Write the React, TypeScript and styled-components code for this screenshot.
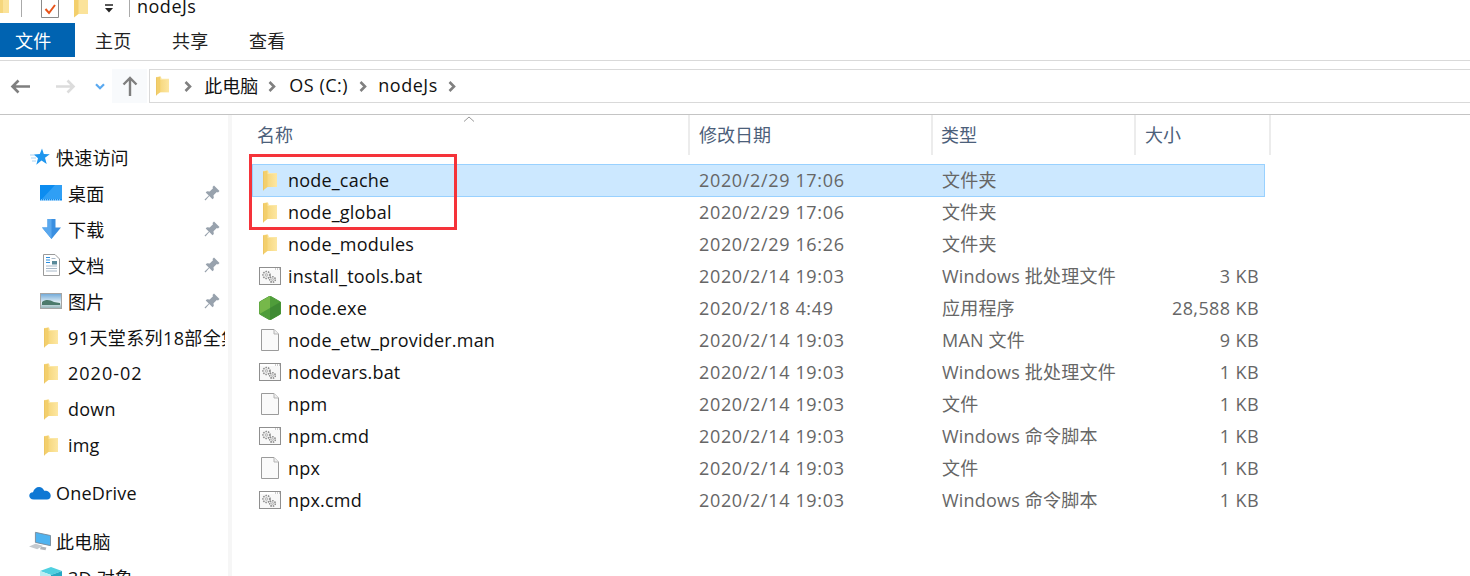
import React from "react";
import styled, { createGlobalStyle } from "styled-components";

const GlobalStyle = createGlobalStyle`
  html, body { margin: 0; padding: 0; background: #fff; }
  body { font-family: "Open Sans", "Noto Sans CJK SC", sans-serif; color: #111; }
`;

const Page = styled.div`
  width: 1470px;
  height: 576px;
  overflow: hidden;
  display: flex;
  flex-direction: column;
  font-size: 18px;
  letter-spacing: 0.2px;
`;

const TitleBar = styled.div`
  height: 23px;
  display: flex;
  align-items: flex-start;
  overflow: hidden;
  flex: none;
`;

const TitleItem = styled.span<{ $ml: number }>`
  display: flex;
  flex: none;
  margin-left: ${(p) => p.$ml}px;
`;

const TitleSep = styled.div<{ $ml: number }>`
  width: 1px;
  height: 17px;
  background: #aaa;
  margin-left: ${(p) => p.$ml}px;
  flex: none;
`;

const TitleText = styled.span`
  margin: -5px 0 0 7px;
  line-height: 22px;
  letter-spacing: 0.5px;
`;

const TabBar = styled.div`
  height: 37px;
  border-bottom: 1px solid #d9d9d9;
  display: flex;
  align-items: flex-start;
  flex: none;
`;

const Tab = styled.div<{ $active?: boolean }>`
  height: 34px;
  width: ${(p) => (p.$active ? 75 : 77)}px;
  display: flex;
  align-items: center;
  padding-left: ${(p) => (p.$active ? 15 : 20)}px;
  box-sizing: border-box;
  background: ${(p) => (p.$active ? "#0063b1" : "transparent")};
  color: ${(p) => (p.$active ? "#fff" : "#222")};
`;

const AddressRow = styled.div`
  height: 54px;
  border-bottom: 1px solid #c4c4c4;
  display: flex;
  align-items: flex-start;
  flex: none;
  box-sizing: border-box;
  padding-top: 8px;
`;

const NavButton = styled.div<{ $w: number; $box?: boolean; $ml?: number }>`
  width: ${(p) => p.$w}px;
  margin-left: ${(p) => p.$ml ?? 0}px;
  height: 34px;
  display: flex;
  align-items: center;
  justify-content: center;
  background: ${(p) => (p.$box ? "#f8fafc" : "transparent")};
  flex: none;
`;

const AddressBox = styled.div`
  flex: 1;
  height: 34px;
  margin: 0 -2px 0 2px;
  border: 1px solid #d9d9d9;
  display: flex;
  align-items: center;
  box-sizing: border-box;
  padding-left: 6px;
`;

const Crumb = styled.span<{ $w: number }>`
  width: ${(p) => p.$w}px;
  flex: none;
  white-space: nowrap;
  margin-top: -2px;
  letter-spacing: ${(p) => (p.$w > 64 ? 0.5 : 0)}px;
`;

const ChevronSlot = styled.span<{ $before: number; $after: number }>`
  display: flex;
  flex: none;
  margin: 1px ${(p) => p.$after}px 0 ${(p) => p.$before}px;
`;

const Body = styled.div`
  flex: 1;
  display: flex;
  min-height: 0;
`;

const Sidebar = styled.div`
  width: 228px;
  flex: none;
  border-right: 4px solid #f6f6f6;
  overflow: hidden;
  padding-top: 24px;
`;

const NavItem = styled.div<{ $level: number; $gap?: number }>`
  height: 36px;
  display: flex;
  align-items: center;
  padding-left: ${(p) => (p.$level ? 40 : 29)}px;
  margin-top: ${(p) => p.$gap ?? 0}px;
  white-space: nowrap;
  overflow: hidden;
`;

const NavIcon = styled.span<{ $level: number }>`
  width: 22px;
  margin-right: ${(p) => (p.$level ? 6 : 5)}px;
  display: flex;
  align-items: center;
  justify-content: center;
  flex: none;
`;

const NavLabel = styled.span<{ $pinned?: boolean; $tracking?: number }>`
  width: ${(p) => (p.$pinned ? 136 : 157)}px;
  overflow: hidden;
  flex: none;
  letter-spacing: ${(p) => p.$tracking ?? 0.2}px;
`;

const Main = styled.div`
  flex: 1;
  position: relative;
  min-width: 0;
`;

const ColumnHeader = styled.div`
  height: 40px;
  display: grid;
  grid-template-columns: 457px 243px 203px 135px;
  color: #4c607a;
  padding-left: 1px;
  letter-spacing: 0;
`;

const HeaderCell = styled.div<{ $pl: number }>`
  border-right: 2px solid #ececec;
  display: flex;
  align-items: center;
  padding: 0 0 2px ${(p) => p.$pl}px;
  box-sizing: border-box;
`;

const SortCaret = styled.svg`
  position: absolute;
  left: 231px;
  top: 1px;
`;

const Rows = styled.div`
  padding: 9px 0 0 20px;
  width: 1013px;
`;

const Row = styled.div<{ $selected?: boolean }>`
  display: grid;
  grid-template-columns: 35px 411px 243px 203px 1fr;
  align-items: center;
  box-sizing: border-box;
  border: 1px solid ${(p) => (p.$selected ? "#99d1ff" : "transparent")};
  background: ${(p) => (p.$selected ? "#cce8ff" : "transparent")};
  margin-bottom: ${(p) => (p.$selected ? -1 : 0)}px;
  padding-bottom: ${(p) => (p.$selected ? 1 : 0)}px;
  height: ${(p) => (p.$selected ? 33 : 32)}px;
`;

const FileIcon = styled.span`
  display: flex;
  justify-content: center;
  margin-left: -2px;
`;

const NameCell = styled.span`
  white-space: nowrap;
`;

const DateCell = styled.span`
  color: #666;
  white-space: nowrap;
  letter-spacing: 0.65px;
`;

const TypeCell = styled.span`
  color: #666;
  white-space: nowrap;
  padding-bottom: 2px;
`;

const SizeCell = styled.span`
  color: #666;
  text-align: right;
  padding-right: 5px;
  white-space: nowrap;
  letter-spacing: 0.4px;
`;

const Annotation = styled.div`
  position: absolute;
  left: 17px;
  top: 39px;
  width: 208px;
  height: 76px;
  box-sizing: border-box;
  border: 3px solid #f5333a;
`;

const Folder = ({ h = 21 }: { h?: number }) => (
  <svg width={(h * 14) / 21} height={h} viewBox="0 0 14 21">
    <defs>
      <linearGradient id="folderBody" x1="0" x2="1" y1="0" y2="0">
        <stop offset="0" stopColor="#f6d77e" />
        <stop offset="1" stopColor="#fde7a2" />
      </linearGradient>
    </defs>
    <path d="M0 1 5 0.500 6 3H14V17H0z" fill="#fbe7a6" />
    <path d="M4 4H14V17H4z" fill="url(#folderBody)" />
    <path d="M0 1.500 4.500 0.500V17L0 20.500z" fill="#f3cf6c" />
    <path d="M0 1.500V20.500" stroke="#e3b958" strokeWidth="0.800" />
  </svg>
);

const Chevron = () => (
  <svg width="8" height="11" viewBox="0 0 8 11">
    <path d="M1.500 1 6 5.500 1.500 10" fill="none" stroke="#808080" strokeWidth="2.600" />
  </svg>
);

const Pin = () => (
  <svg width="16" height="16" viewBox="0 0 16 16">
    <path d="M10 0.500 15.500 6 14 7.500 12.800 7 9.500 10.300 9.800 13 8.500 14.300 5.300 11.100 1.500 15.500 0.500 14.500 4.800 10.600 1.700 7.500 3 6.200 5.700 6.500 9 3.200 8.500 2z" fill="#98a2ad" />
  </svg>
);

const Star = () => (
  <svg width="20" height="18" viewBox="0 0 20 18">
    <path d="M12 0.500 13.800 6 19.800 6.200 15 9.800 16.700 16 11.500 12.500 6.300 16.800 8 10.200 3.800 6.500 9.800 6z" fill="#1f96ee" />
    <path d="M0 7h5M1 10h5M2 13h4" stroke="#a8d3f5" strokeWidth="1" />
  </svg>
);

const Desktop = () => (
  <svg width="22" height="16" viewBox="0 0 22 16">
    <rect x="0" y="0" width="22" height="15.500" fill="#0c8cf0" />
    <path d="M15 0H22V14H2z" fill="#2f9ff5" />
    <path d="M1 15h20" stroke="#e0f0ff" strokeDasharray="1 1" />
  </svg>
);

const Download = () => (
  <svg width="19" height="20" viewBox="0 0 19 20">
    <path d="M5.500 0h8v8.500H19L9.500 20 0 8.500h5.500z" fill="#3a8fe0" />
    <path d="M5.500 0h4v20L0 8.500h5.500z" fill="#5aa8ee" />
  </svg>
);

const Doc = () => (
  <svg width="17" height="22" viewBox="0 0 17 22">
    <path d="M0.500 0.500H12L16.500 5V21.500H0.500z" fill="#fff" stroke="#9a9a9a" />
    <path d="M3 3.500h4M3 6h4M3 8.500h4" stroke="#2d8fe0" />
    <path d="M8.500 4.500h4M3 12h11M3 14.500h11M3 17h11" stroke="#a8b8c8" />
    <rect x="9" y="7" width="5" height="3.500" fill="#5a8a9a" />
  </svg>
);

const Picture = () => (
  <svg width="22" height="16" viewBox="0 0 22 16">
    <defs>
      <linearGradient id="sky" x1="0" x2="0" y1="0" y2="1">
        <stop offset="0" stopColor="#6fa8d8" />
        <stop offset="0.6" stopColor="#e4f0f5" />
        <stop offset="1" stopColor="#8fb0b5" />
      </linearGradient>
    </defs>
    <rect x="0.500" y="0.500" width="21" height="15" fill="url(#sky)" stroke="#a5a5a5" />
    <path d="M2 9c4-3 8-2 12 0l6 1v2H2z" fill="#4c7a6c" />
  </svg>
);

const Cloud = () => (
  <svg width="22" height="14" viewBox="0 0 23 15">
    <path d="M5 14.500C1.500 14.500 0 12.500 0 10.500 0 8.500 1.500 7 4 6.800 5 3 7.500 1 10.500 1 13 1 15 2.500 16 5c4-.3 7 2 7 5.500 0 2.300-1.500 4-4 4z" fill="#0f78d4" />
  </svg>
);

const Computer = () => (
  <svg width="24" height="21" viewBox="0 0 24 21">
    <path d="M7 0.500 23.500 4V15L7 11.500z" fill="#4fb3f0" stroke="#7a8a98" />
    <path d="M0 16l7-3 8 2-6 4z" fill="#c4c9ce" />
    <path d="M13 16l6 1-1 3-6-1z" fill="#b0b5ba" />
  </svg>
);

const Cube = () => (
  <svg width="22" height="20" viewBox="0 0 22 20">
    <path d="M11 0 22 4 11 8 0 4z" fill="#4fd0e0" />
    <path d="M0 4l11 4v12L0 16z" fill="#b8eef2" />
    <path d="M22 4 11 8v12l11-4z" fill="#26a9c4" />
  </svg>
);

const PlainFile = () => (
  <svg width="18" height="22" viewBox="0 0 18 22">
    <path d="M0.500 0.500H13L17.500 5V21.500H0.500z" fill="#fafafa" stroke="#9b9b9b" />
    <path d="M13 0.500V5H17.500" fill="#efefef" stroke="#b5b5b5" />
  </svg>
);

const Gear = ({ x, y, r }: { x: number; y: number; r: number }) => (
  <g>
    <circle cx={x} cy={y} r={r} fill="none" stroke="#8a8a8a" strokeWidth="1.600" strokeDasharray="1.500 1" />
    <circle cx={x} cy={y} r={r * 0.4} fill="#dcdcdc" stroke="#9a9a9a" strokeWidth="0.600" />
  </g>
);

const BatFile = () => (
  <svg width="22" height="18" viewBox="0 0 22 18">
    <rect x="0.500" y="0.500" width="21" height="17" fill="#f8f8f8" stroke="#8f8f8f" />
    <path d="M1 1h20v2H1z" fill="#fff" />
    <path d="M16 2h5" stroke="#9a9a9a" strokeDasharray="1 1" />
    <Gear x={7.500} y={8} r={3.500} />
    <Gear x={13.500} y={12.500} r={2.800} />
  </svg>
);

const NodeExe = () => (
  <svg width="22" height="24" viewBox="0 0 22 24">
    <path d="M11 0 21.500 6V18L11 24 0.500 18V6z" fill="#4f9d3a" stroke="#4f9d3a" strokeLinejoin="round" />
    <path d="M11 0 0.500 6V18L11 12z" fill="#76b84a" />
    <path d="M11 12 21.500 6V18L11 24z" fill="#3f8a33" />
  </svg>
);

const HArrow = ({ color, flip }: { color: string; flip?: boolean }) => (
  <svg width="20" height="15" viewBox="0 0 20 15">
    <path
      d={flip ? "M0 7.500H17.500M11.500 1.500l6 6-6 6" : "M20 7.500H2.500M8.500 1.500l-6 6 6 6"}
      fill="none"
      stroke={color}
      strokeWidth="2.600"
    />
  </svg>
);

const nav = [
  { label: "快速访问", level: 0, icon: <Star /> },
  { label: "桌面", level: 1, icon: <Desktop />, pin: true },
  { label: "下载", level: 1, icon: <Download />, pin: true },
  { label: "文档", level: 1, icon: <Doc />, pin: true },
  { label: "图片", level: 1, icon: <Picture />, pin: true },
  { label: "91天堂系列18部全集", level: 1, icon: <Folder />, tracking: 0.4 },
  { label: "2020-02", level: 1, icon: <Folder />, tracking: 1 },
  { label: "down", level: 1, icon: <Folder /> },
  { label: "img", level: 1, icon: <Folder /> },
  { label: "OneDrive", level: 0, icon: <Cloud />, gap: 12 },
  { label: "此电脑", level: 0, icon: <Computer />, gap: 12 },
  { label: "3D 对象", level: 1, icon: <Cube /> },
];

const files = [
  { name: "node_cache", date: "2020/2/29 17:06", type: "文件夹", size: "", icon: <Folder />, selected: true },
  { name: "node_global", date: "2020/2/29 17:06", type: "文件夹", size: "", icon: <Folder /> },
  { name: "node_modules", date: "2020/2/29 16:26", type: "文件夹", size: "", icon: <Folder /> },
  { name: "install_tools.bat", date: "2020/2/14 19:03", type: "Windows 批处理文件", size: "3 KB", icon: <BatFile /> },
  { name: "node.exe", date: "2020/2/18 4:49", type: "应用程序", size: "28,588 KB", icon: <NodeExe /> },
  { name: "node_etw_provider.man", date: "2020/2/14 19:03", type: "MAN 文件", size: "9 KB", icon: <PlainFile /> },
  { name: "nodevars.bat", date: "2020/2/14 19:03", type: "Windows 批处理文件", size: "1 KB", icon: <BatFile /> },
  { name: "npm", date: "2020/2/14 19:03", type: "文件", size: "1 KB", icon: <PlainFile /> },
  { name: "npm.cmd", date: "2020/2/14 19:03", type: "Windows 命令脚本", size: "1 KB", icon: <BatFile /> },
  { name: "npx", date: "2020/2/14 19:03", type: "文件", size: "1 KB", icon: <PlainFile /> },
  { name: "npx.cmd", date: "2020/2/14 19:03", type: "Windows 命令脚本", size: "1 KB", icon: <BatFile /> },
];

export default function App() {
  return (
    <Page>
      <GlobalStyle />
      <TitleBar>
        <TitleItem $ml={0}>
          <svg width="9" height="13" viewBox="0 0 9 13">
            <rect width="9" height="13" fill="#fbe39a" />
            <rect width="3" height="13" fill="#f5d67c" />
          </svg>
        </TitleItem>
        <TitleSep $ml={12} />
        <TitleItem $ml={19}>
          <svg width="18" height="18" viewBox="0 0 18 18">
            <path d="M0.500 0V17.500H17.500V0" fill="#fff" stroke="#8a8a8a" />
            <path d="M4.500 9 8 13 14 5" fill="none" stroke="#e8541a" strokeWidth="2" />
          </svg>
        </TitleItem>
        <TitleItem $ml={15}>
          <svg width="14" height="18" viewBox="0 0 14 18">
            <path d="M4 0H14V14H4z" fill="#fbe39a" />
            <path d="M0 0H4.500V14L0 17.500z" fill="#f3cf6c" />
          </svg>
        </TitleItem>
        <TitleItem $ml={16}>
          <svg width="10" height="13" viewBox="0 0 10 13">
            <path d="M1 5h8" stroke="#222" strokeWidth="1.500" />
            <path d="M1 8h8L5 12.500z" fill="#222" />
          </svg>
        </TitleItem>
        <TitleSep $ml={15} />
        <TitleText>nodeJs</TitleText>
      </TitleBar>
      <TabBar>
        <Tab $active>文件</Tab>
        <Tab>主页</Tab>
        <Tab>共享</Tab>
        <Tab>查看</Tab>
      </TabBar>
      <AddressRow>
        <NavButton $w={39}><HArrow color="#7f7f7f" /></NavButton>
        <NavButton $w={53}><HArrow color="#dcdcdc" flip /></NavButton>
        <NavButton $w={15}>
          <svg width="10" height="7" viewBox="0 0 10 7"><path d="M1 1.200 5 5.200l4-4" fill="none" stroke="#5aa9f0" strokeWidth="2.200" /></svg>
        </NavButton>
        <NavButton $w={35} $ml={5} $box>
          <svg width="16" height="20" viewBox="0 0 16 20"><path d="M8 20V2M1.500 8.500 8 2l6.500 6.500" fill="none" stroke="#7f7f7f" strokeWidth="2.400" /></svg>
        </NavButton>
        <AddressBox>
          <Folder h={20} />
          <ChevronSlot $before={15} $after={12}><Chevron /></ChevronSlot>
          <Crumb $w={64}>此电脑</Crumb>
          <ChevronSlot $before={0} $after={13}><Chevron /></ChevronSlot>
          <Crumb $w={70}>OS (C:)</Crumb>
          <ChevronSlot $before={0} $after={11}><Chevron /></ChevronSlot>
          <Crumb $w={70}>nodeJs</Crumb>
          <ChevronSlot $before={0} $after={0}><Chevron /></ChevronSlot>
        </AddressBox>
      </AddressRow>
      <Body>
        <Sidebar>
          {nav.map((item) => (
            <NavItem key={item.label} $level={item.level} $gap={item.gap}>
              <NavIcon $level={item.level}>{item.icon}</NavIcon>
              <NavLabel $pinned={item.pin} $tracking={item.tracking}>{item.label}</NavLabel>
              {item.pin && <Pin />}
            </NavItem>
          ))}
        </Sidebar>
        <Main>
          <SortCaret width="12" height="6" viewBox="0 0 12 6">
            <path d="M1 5.500 6 1l5 4.500" fill="none" stroke="#999" />
          </SortCaret>
          <ColumnHeader>
            <HeaderCell $pl={24}>名称</HeaderCell>
            <HeaderCell $pl={9}>修改日期</HeaderCell>
            <HeaderCell $pl={8}>类型</HeaderCell>
            <HeaderCell $pl={9}>大小</HeaderCell>
          </ColumnHeader>
          <Rows>
            {files.map((file) => (
              <Row key={file.name} $selected={file.selected}>
                <FileIcon>{file.icon}</FileIcon>
                <NameCell>{file.name}</NameCell>
                <DateCell>{file.date}</DateCell>
                <TypeCell>{file.type}</TypeCell>
                <SizeCell>{file.size}</SizeCell>
              </Row>
            ))}
          </Rows>
          <Annotation />
        </Main>
      </Body>
    </Page>
  );
}
